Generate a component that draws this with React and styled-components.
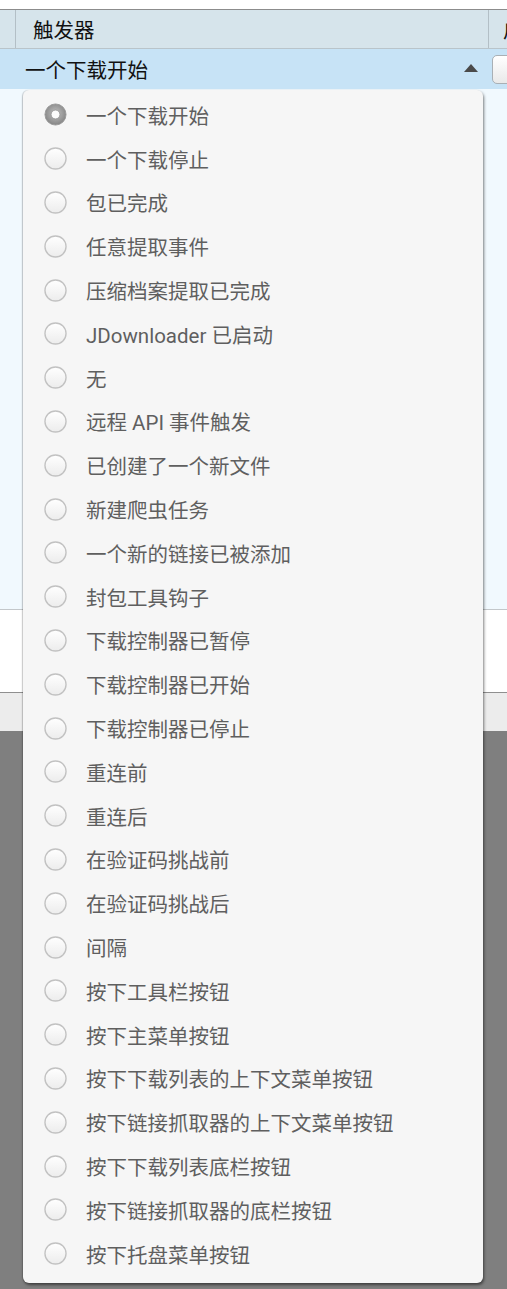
import React from "react"
import styled, { createGlobalStyle } from "styled-components"

const GlobalStyle = createGlobalStyle`
  html, body {
    margin: 0;
    padding: 0;
    background: #7f7f7f;
  }
  body {
    font-family: Roboto, "Noto Sans CJK SC", sans-serif;
    overflow: hidden;
  }
`

const triggers = [
  "一个下载开始",
  "一个下载停止",
  "包已完成",
  "任意提取事件",
  "压缩档案提取已完成",
  "JDownloader 已启动",
  "无",
  "远程 API 事件触发",
  "已创建了一个新文件",
  "新建爬虫任务",
  "一个新的链接已被添加",
  "封包工具钩子",
  "下载控制器已暂停",
  "下载控制器已开始",
  "下载控制器已停止",
  "重连前",
  "重连后",
  "在验证码挑战前",
  "在验证码挑战后",
  "间隔",
  "按下工具栏按钮",
  "按下主菜单按钮",
  "按下下载列表的上下文菜单按钮",
  "按下链接抓取器的上下文菜单按钮",
  "按下下载列表底栏按钮",
  "按下链接抓取器的底栏按钮",
  "按下托盘菜单按钮",
]

const Page = styled.div`
  position: relative;
  width: 507px;
  height: 1289px;
  overflow: hidden;
`

const TopStrip = styled.div`
  height: 9px;
  background: #fff;
  border-bottom: 1px solid #8c8c8c;
`

const HeaderRow = styled.div`
  display: flex;
  height: 38px;
  background: #d6e4eb;
  border-bottom: 1px solid #b9c4ca;
  font-size: 20.5px;
  color: #111;
  overflow: hidden;
`

const HeaderCell = styled.div`
  flex: ${p => (p.$grow ? 1 : "none")};
  width: ${p => (p.$width ? `${p.$width}px` : "auto")};
  box-sizing: border-box;
  display: flex;
  align-items: center;
  padding-left: ${p => p.$pad || 0}px;
  border-right: ${p => (p.$line ? "1px solid #b3bfc6" : "none")};
  white-space: nowrap;
  overflow: hidden;
`

const SelectedRow = styled.div`
  display: flex;
  align-items: center;
  height: 40px;
  padding-left: 25px;
  background: #c7e3f6;
  font-size: 20.5px;
  color: #111;
`

const RowLabel = styled.span`
  flex: 1;
`

const Arrow = styled.span`
  width: 0;
  height: 0;
  border-left: 7.5px solid transparent;
  border-right: 7.5px solid transparent;
  border-bottom: 8px solid #4a4a4a;
  margin-right: 14px;
  margin-top: -2px;
`

const EditButton = styled.span`
  width: 30px;
  height: 29px;
  margin-right: -15px;
  border: 1px solid #a9b0b5;
  border-radius: 5px;
  background: linear-gradient(#ffffff, #e9e9e9);
  box-sizing: border-box;
`

const ListBody = styled.div`
  height: 520px;
  background: #f1f9fe;
  border-bottom: 1px solid #c3c7ca;
`

const WhitePanel = styled.div`
  height: 82px;
  background: #fff;
  border-bottom: 1px solid #8f8f8f;
`

const BottomBar = styled.div`
  height: 38px;
  background: #ececec;
`

const Popup = styled.div`
  position: absolute;
  left: 23px;
  top: 90px;
  width: 460px;
  padding: 3px 0 7px;
  box-sizing: border-box;
  background: #f6f6f6;
  border-radius: 6px;
  box-shadow: 1px 2px 3px rgba(0, 0, 0, 0.5), -1px 0 1px rgba(0, 0, 0, 0.15);
`

const Option = styled.div`
  display: flex;
  align-items: center;
  height: 43.8px;
  padding-left: 21px;
  gap: 19px;
  font-size: 20.5px;
  color: #5f5f5f;
  white-space: nowrap;
`

const Radio = ({ checked }) => (
  <svg width="23" height="23" viewBox="0 0 24 24">
    <defs>
      <linearGradient id="rOff" x1="0" y1="0" x2="0" y2="1">
        <stop offset="0" stopColor="#ffffff" />
        <stop offset="1" stopColor="#ececec" />
      </linearGradient>
      <radialGradient id="rOn" cx="0.5" cy="0.45" r="0.55">
        <stop offset="0.3" stopColor="#b0b0b0" />
        <stop offset="1" stopColor="#858585" />
      </radialGradient>
    </defs>
    {checked ? (
      <>
        <circle cx="12" cy="12" r="11" fill="url(#rOn)" stroke="#9a9a9a" strokeWidth="1" />
        <circle cx="12" cy="12" r="4.6" fill="#fdfdfd" stroke="#939393" strokeWidth="0.8" />
      </>
    ) : (
      <circle cx="12" cy="12" r="11" fill="url(#rOff)" stroke="#c2c2c2" strokeWidth="1.4" />
    )}
  </svg>
)

export default function App() {
  return (
    <Page>
      <GlobalStyle />
      <TopStrip />
      <HeaderRow>
        <HeaderCell $width={16} $line />
        <HeaderCell $grow $pad={17} $line>
          触发器
        </HeaderCell>
        <HeaderCell $width={18} $pad={14}>
          启
        </HeaderCell>
      </HeaderRow>
      <SelectedRow>
        <RowLabel>一个下载开始</RowLabel>
        <Arrow />
        <EditButton />
      </SelectedRow>
      <ListBody />
      <WhitePanel />
      <BottomBar />
      <Popup>
        {triggers.map((t, i) => (
          <Option key={t}>
            <Radio checked={i === 0} />
            <span>{t}</span>
          </Option>
        ))}
      </Popup>
    </Page>
  )
}
